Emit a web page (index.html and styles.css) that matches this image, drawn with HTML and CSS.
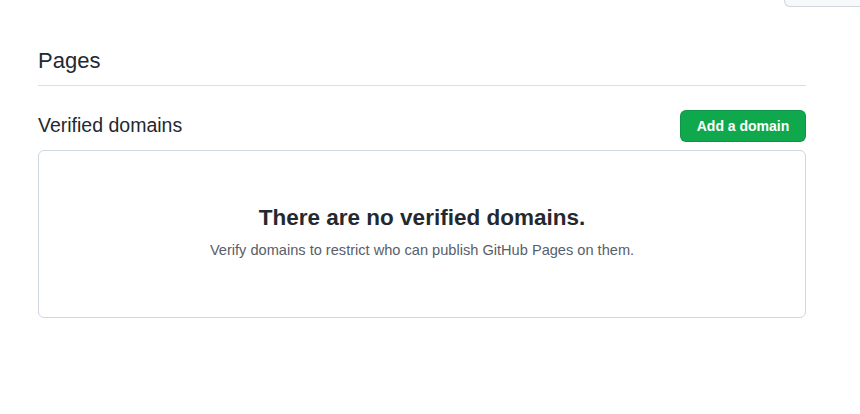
FILE: index.html
```html
<!DOCTYPE html>
<html lang="en">
<head>
<meta charset="utf-8">
<title>Pages</title>
<link rel="stylesheet" href="styles.css">
</head>
<body>
  <div class="topbar"><div class="tab"></div></div>
  <main class="main">
    <div class="subhead">
      <h2 class="subhead-heading">Pages</h2>
    </div>
    <div class="section-row">
      <h3 class="section-title">Verified domains</h3>
      <button class="btn-primary" type="button">Add a domain</button>
    </div>
    <div class="blankslate">
      <h3 class="blankslate-heading">There are no verified domains.</h3>
      <p class="blankslate-text">Verify domains to restrict who can publish GitHub Pages on them.</p>
    </div>
  </main>
</body>
</html>
```
FILE: styles.css
```css
html, body {
  margin: 0;
  padding: 0;
  background: #ffffff;
}
body {
  font-family: "Liberation Sans", Arial, sans-serif;
  color: #24292f;
  width: 860px;
  height: 414px;
  overflow: hidden;
}
.topbar {
  height: 7px;
  display: flex;
  justify-content: flex-end;
}
.tab {
  width: 75px;
  height: 6px;
  background: #f6f8fa;
  border-left: 1px solid #d0d7de;
  border-bottom: 1px solid #d0d7de;
  border-bottom-left-radius: 6px;
}
.main {
  margin-left: 38px;
  width: 768px;
}
.subhead {
  margin-top: 40px;
  padding-bottom: 10px;
  border-bottom: 1px solid #d8dee4;
}
.subhead-heading {
  margin: 0;
  font-size: 22px;
  font-weight: 400;
  line-height: 1.25;
}
.section-row {
  margin-top: 24px;
  display: flex;
  align-items: center;
  justify-content: space-between;
}
.section-title {
  margin: 0;
  font-size: 19.5px;
  font-weight: 400;
  line-height: 1.25;
}
.btn-primary {
  box-sizing: border-box;
  height: 32px;
  width: 126px;
  padding: 0;
  border: 1px solid rgba(27, 31, 36, 0.15);
  border-radius: 6px;
  background: #10a84c;
  color: #ffffff;
  font-family: "Liberation Sans", Arial, sans-serif;
  font-size: 14px;
  font-weight: 700;
  line-height: 20px;
  white-space: nowrap;
  text-align: center;
}
.blankslate {
  margin-top: 8px;
  height: 166px;
  border: 1px solid #d0d7de;
  border-radius: 6px;
  text-align: center;
  display: flex;
  flex-direction: column;
  align-items: center;
}
.blankslate-heading {
  margin: 50px 0 0;
  font-size: 22.5px;
  font-weight: 700;
  line-height: 33px;
}
.blankslate-text {
  margin: 6px 0 0;
  font-size: 14.6px;
  line-height: 21px;
  color: #57606a;
}
```
